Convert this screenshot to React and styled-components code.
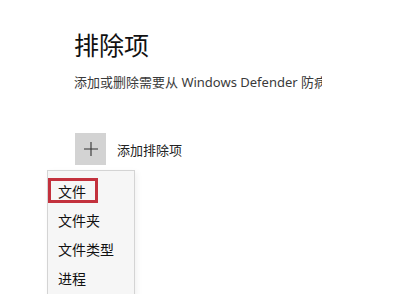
import React from "react";
import styled, { createGlobalStyle } from "styled-components";

const GlobalStyle = createGlobalStyle`
    html, body {
        margin: 0;
        padding: 0;
        background: #ffffff;
    }
    body {
        font-family: "Noto Sans", "Noto Sans CJK SC", sans-serif;
        overflow: hidden;
    }
`;

const menuItems = ["文件", "文件夹", "文件类型", "进程"];

const App = () => {
    return (
        <>
            <GlobalStyle />
            <Page>
                <Title>排除项</Title>
                <Subtitle>添加或删除需要从 Windows Defender 防病毒扫描中排除的项目。</Subtitle>
                <AddRow>
                    <PlusButton aria-label="添加排除项">
                        <svg width="16" height="16" viewBox="0 0 16 16">
                            <path d="M8 1v14M1 8h14" stroke="#333" strokeWidth="1.1" fill="none" />
                        </svg>
                    </PlusButton>
                    <AddLabel>添加排除项</AddLabel>
                    <Menu>
                        {menuItems.map((item, index) => (
                            <MenuItem key={item}>
                                {index === 0 && <Marker />}
                                {item}
                            </MenuItem>
                        ))}
                    </Menu>
                </AddRow>
            </Page>
        </>
    );
};

const Page = styled.div`
    display: flex;
    flex-direction: column;
    align-items: flex-start;
    padding: 28px 0 0 74px;
    height: 294px;
    box-sizing: border-box;
    overflow: hidden;
`;

const Title = styled.h1`
    margin: 0;
    font-size: 25px;
    font-weight: 400;
    line-height: 34px;
    color: #111;
`;

const Subtitle = styled.div`
    margin-top: 11px;
    width: 248px;
    overflow: hidden;
    white-space: nowrap;
    font-size: 13px;
    line-height: 18px;
    color: #3a3a3a;
`;

const AddRow = styled.div`
    position: relative;
    display: flex;
    align-items: center;
    gap: 11px;
    margin-top: 42px;
    margin-left: 1px;
`;

const PlusButton = styled.button`
    display: flex;
    align-items: center;
    justify-content: center;
    width: 31px;
    height: 32px;
    padding: 0;
    border: none;
    background: #d3d3d3;
`;

const AddLabel = styled.span`
    font-size: 13px;
    color: #222;
`;

const Menu = styled.div`
    position: absolute;
    left: -28px;
    top: 37px;
    width: 88px;
    height: 128px;
    padding-top: 6px;
    box-sizing: border-box;
    background: #f6f6f6;
    border: 1px solid #d4d4d4;
    border-bottom: none;
    box-shadow: 2px 2px 6px rgba(0, 0, 0, 0.06);
`;

const MenuItem = styled.div`
    position: relative;
    height: 29px;
    line-height: 29px;
    padding-left: 10px;
    font-size: 14px;
    color: #111;
`;

const Marker = styled.span`
    position: absolute;
    left: 0;
    top: 1px;
    width: 50px;
    height: 25px;
    box-sizing: border-box;
    border: 3px solid #c3313d;
`;

export default App;
